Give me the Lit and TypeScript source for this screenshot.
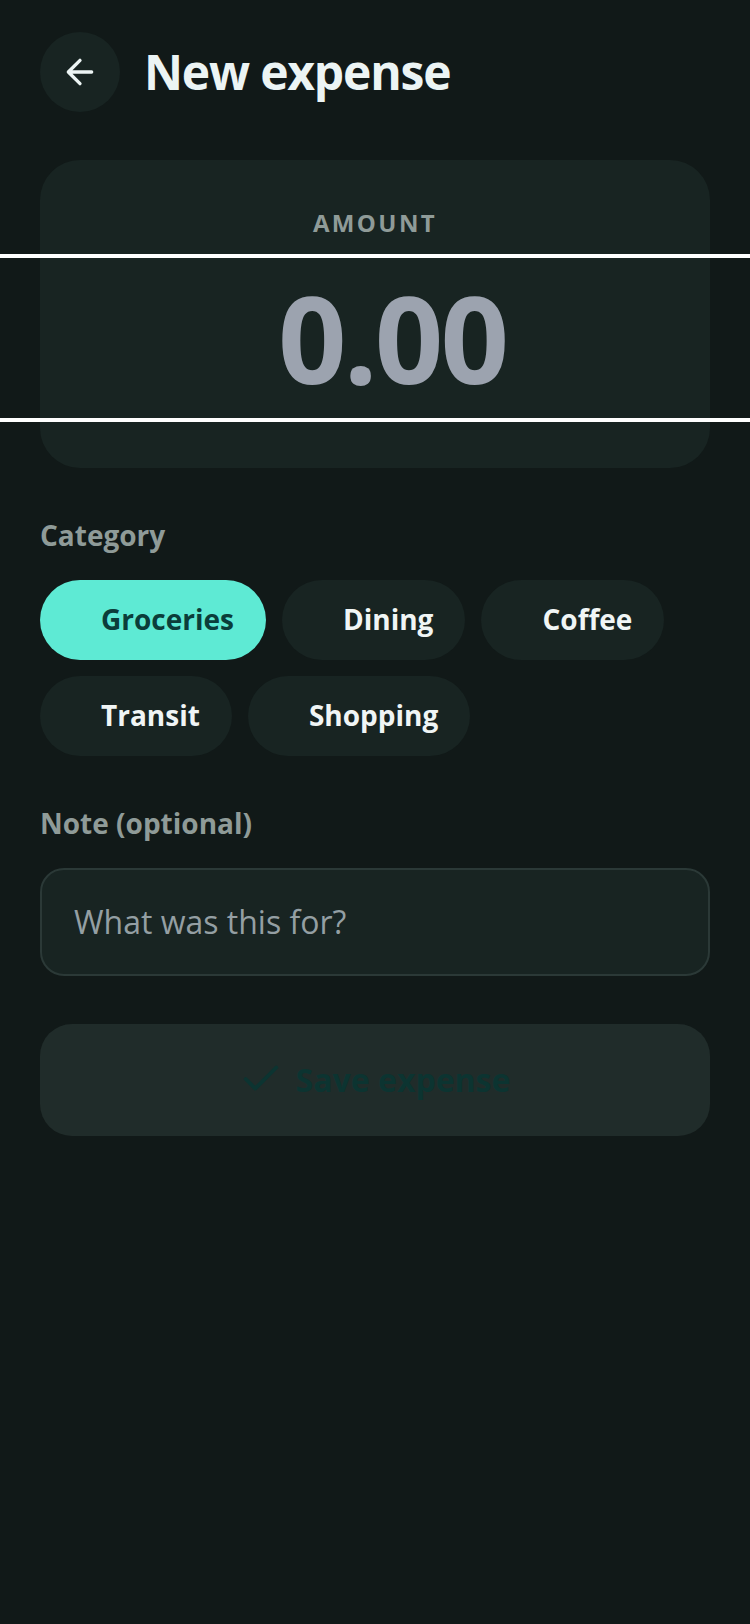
import { LitElement, html, css } from "lit";
import { customElement } from "lit/decorators.js";

@customElement("app-root")
export class AppRoot extends LitElement {
  static styles = css`
    :host {
      display: block;
      min-height: 1624px;
      background: #111918;
      color: #ecf4f4;
      font-family: "Open Sans", "Noto Sans", sans-serif;
      overflow: hidden;
    }
    .page {
      display: flex;
      flex-direction: column;
      padding: 32px 40px 0;
    }
    .header {
      display: flex;
      align-items: center;
      gap: 24px;
      height: 80px;
    }
    .back {
      width: 80px;
      height: 80px;
      border: none;
      padding: 0;
      border-radius: 50%;
      background: #182422;
      display: flex;
      align-items: center;
      justify-content: center;
    }
    .back svg {
      width: 40px;
      height: 40px;
    }
    h1 {
      margin: 0;
      font-size: 48px;
      line-height: 64px;
      font-weight: 700;
      letter-spacing: -1.2px;
      color: #ecf4f4;
    }
    .card {
      margin-top: 48px;
      height: 308px;
      box-sizing: border-box;
      border-radius: 40px;
      background: #182422;
      padding-top: 47px;
      display: flex;
      flex-direction: column;
      align-items: center;
    }
    .amount-label {
      font-size: 24px;
      line-height: 32px;
      font-weight: 700;
      letter-spacing: 2.4px;
      color: #8f9b98;
    }
    .amount {
      box-sizing: border-box;
      flex: none;
      width: 750px;
      height: 168px;
      margin-top: 15px;
      border: solid #fff;
      border-width: 4px 0;
      background: transparent;
      text-align: center;
      font-family: "Open Sans", "Noto Sans", sans-serif;
      font-size: 120px;
      font-weight: 700;
      letter-spacing: -3px;
      padding: 0 0 2px 34px;
      outline: none;
    }
    .amount::placeholder {
      color: #9ca3af;
      opacity: 1;
    }
    .section-label {
      font-size: 28px;
      line-height: 36px;
      font-weight: 700;
      color: #8f9b98;
    }
    .cat-label {
      margin-top: 49px;
    }
    .chips {
      margin-top: 27px;
      display: flex;
      flex-wrap: wrap;
      gap: 16px;
    }
    .chip {
      height: 80px;
      box-sizing: border-box;
      border-radius: 40px;
      border: none;
      padding: 0 32px 2px;
      background: #182422;
      color: #f0f5f5;
      font-family: inherit;
      font-size: 28px;
      font-weight: 700;
      display: flex;
      align-items: center;
      gap: 8px;
    }
    .chip .slot {
      width: 21px;
      height: 20px;
    }
    .chip.on {
      background: #5eead4;
      color: #0b3d3a;
    }
    .note-label {
      margin-top: 49px;
    }
    .note {
      box-sizing: border-box;
      margin-top: 27px;
      width: 100%;
      height: 108px;
      border: 2px solid #2b3937;
      border-radius: 24px;
      background: #182422;
      padding: 0 32px 2px;
      font-family: inherit;
      font-size: 32px;
      color: #f0f5f5;
      outline: none;
    }
    .note::placeholder {
      color: #949fa3;
      opacity: 1;
    }
    .save {
      margin-top: 48px;
      height: 112px;
      border: none;
      border-radius: 32px;
      padding: 0 2px 2px 0;
      background: #202c2a;
      color: #0c3431;
      font-family: inherit;
      font-size: 32px;
      font-weight: 700;
      display: flex;
      align-items: center;
      justify-content: center;
      gap: 12px;
    }
    .save svg {
      width: 46px;
      height: 46px;
    }
  `;

  render() {
    const chips = ["Groceries", "Dining", "Coffee", "Transit", "Shopping"];
    return html`
      <div class="page">
        <div class="header">
          <button class="back" aria-label="Back">
            <svg viewBox="0 0 24 24" fill="none" stroke="#ecf4f4" stroke-width="2" stroke-linecap="round" stroke-linejoin="round">
              <path d="M19 12H5M12 19l-7-7 7-7" />
            </svg>
          </button>
          <h1>New expense</h1>
        </div>
        <div class="card">
          <div class="amount-label">AMOUNT</div>
          <input class="amount" placeholder="0.00" />
        </div>
        <div class="section-label cat-label">Category</div>
        <div class="chips">
          ${chips.map(
            (c, i) => html`<button class="chip ${i === 0 ? "on" : ""}"><span class="slot"></span>${c}</button>`
          )}
        </div>
        <div class="section-label note-label">Note (optional)</div>
        <input class="note" placeholder="What was this for?" />
        <button class="save">
          <svg viewBox="0 0 24 24" fill="none" stroke="#0c3431" stroke-width="2" stroke-linecap="round" stroke-linejoin="round">
            <path d="M20 6L9 17l-5-5" />
          </svg>
          Save expense
        </button>
      </div>
    `;
  }
}
